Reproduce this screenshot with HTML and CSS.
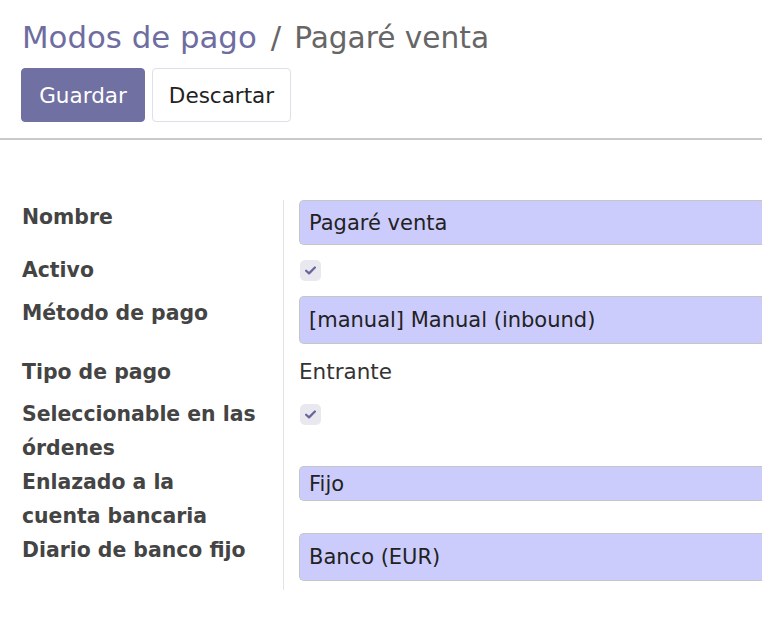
FILE: index.html
```html
<!DOCTYPE html>
<html>
<head>
  <title>Pagaré venta</title>
  <meta charset="utf-8">
  <link rel="stylesheet" href="styles.css">
</head>
<body>
  <div class="control-panel">
    <div class="breadcrumb"><a href="#">Modos de pago</a><span class="sep">/</span><span class="current">Pagaré venta</span></div>
    <div class="buttons">
      <button class="btn btn-primary">Guardar</button>
      <button class="btn btn-secondary">Descartar</button>
    </div>
  </div>
  <div class="sheet">
    <div class="group">
      <div class="row">
        <label class="label">Nombre</label>
        <div class="value"><div class="input h45">Pagaré venta</div></div>
      </div>
      <div class="row gap9">
        <label class="label">Activo</label>
        <div class="value"><span class="check"><svg width="11" height="9" viewBox="0 0 10 8"><path d="M1 4.2 L3.7 6.6 L9 1.2" fill="none" stroke="#67659b" stroke-width="2" stroke-linecap="round" stroke-linejoin="round"/></svg></span></div>
      </div>
      <div class="row gap11">
        <label class="label">Método de pago</label>
        <div class="value"><div class="input h48">[manual] Manual (inbound)</div></div>
      </div>
      <div class="row">
        <label class="label">Tipo de pago</label>
        <div class="value"><span class="text">Entrante</span></div>
      </div>
      <div class="row gap0">
        <label class="label">Seleccionable en las órdenes</label>
        <div class="value"><span class="check"><svg width="11" height="9" viewBox="0 0 10 8"><path d="M1 4.2 L3.7 6.6 L9 1.2" fill="none" stroke="#67659b" stroke-width="2" stroke-linecap="round" stroke-linejoin="round"/></svg></span></div>
      </div>
      <div class="row gap0">
        <label class="label">Enlazado a la cuenta bancaria</label>
        <div class="value"><div class="input h35">Fijo</div></div>
      </div>
      <div class="row last">
        <label class="label">Diario de banco fijo</label>
        <div class="value"><div class="input h48">Banco (EUR)</div></div>
      </div>
    </div>
  </div>
</body>
</html>
```
FILE: styles.css
```css
body { margin: 0; padding: 0; background: #fff; font-family: "DejaVu Sans", "Liberation Sans", sans-serif; color: #222; overflow-x: hidden; }

.control-panel { padding: 17px 0 0 22px; border-bottom: 2px solid #c9c9c9; height: 140px; box-sizing: border-box; }
.breadcrumb { font-size: 30.8px; line-height: 40px; color: #666; white-space: nowrap; }
.breadcrumb a { color: #6f6d9f; text-decoration: none; }
.breadcrumb .sep { margin: 0 13px 0 14px; color: #666; }
.breadcrumb .current { font-size: 29.6px; }
.buttons { display: flex; gap: 7px; margin-top: 10px; margin-left: -1px; }
.btn { font-family: inherit; font-size: 21.5px; height: 54px; border-radius: 4px; padding: 0; cursor: pointer; }
.btn-primary { background: #7170a2; color: #fff; border: 1px solid #7170a2; width: 124px; }
.btn-secondary { background: #fff; color: #222; border: 1.5px solid #dde0e6; width: 139px; }

.sheet { padding: 60px 0 0 22px; }
.group { display: flex; flex-direction: column; background: linear-gradient(#e3e3e3, #e3e3e3) 261px 0 / 1px 100% no-repeat; }
.row { display: flex; align-items: flex-start; margin-bottom: 8px; }
.row.gap9 { margin-bottom: 9px; }
.row.gap11 { margin-bottom: 11px; }
.row.gap0 { margin-bottom: 0; }
.row.last { margin-bottom: 0; padding-bottom: 9px; }
.label { width: 262px; flex: none; box-sizing: border-box; padding-right: 26px; font-size: 20.4px; font-weight: bold; color: #444; line-height: 34px; }
.value { flex: 1; padding-left: 15px; min-width: 0; }

.input { box-sizing: border-box; background: #ccccfc; border: 1.5px solid #c6c6c6; border-right: none; border-radius: 5px 0 0 5px; padding-left: 9px; font-size: 21px; color: #222; display: flex; align-items: center; white-space: nowrap; margin-right: -20px; }
.input.h45 { height: 45px; }
.input.h48 { height: 48px; }
.input.h35 { height: 35px; margin-top: 1px; }
.text { display: block; font-size: 21.5px; line-height: 34px; color: #333; }
.check { display: flex; align-items: center; justify-content: center; width: 21px; height: 21px; margin-top: 7px; margin-left: 1px; background: #e8e8ee; border-radius: 5px; }
```
